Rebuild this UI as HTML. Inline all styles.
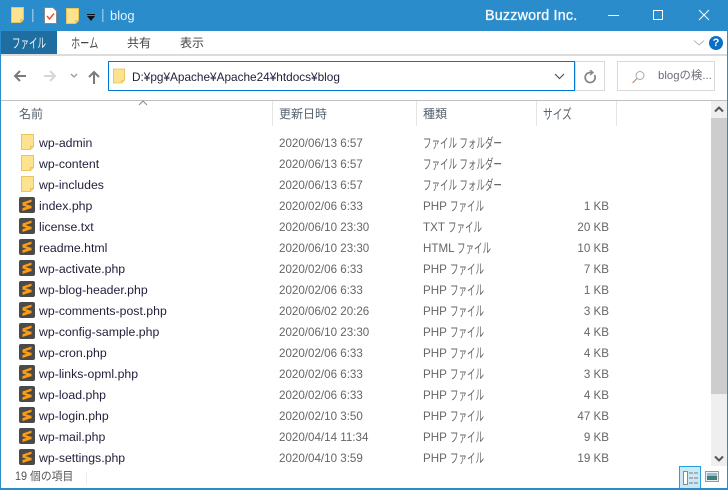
<!DOCTYPE html>
<html lang="ja"><head><meta charset="utf-8"><title>blog</title>
<style>
html,body{margin:0;padding:0;width:728px;height:490px;overflow:hidden;background:#fff}
body{position:relative;font-family:"Liberation Sans","Noto Sans CJK JP",sans-serif;font-size:12px;color:#333}
.a{position:absolute;white-space:nowrap}
.b{position:absolute}
.row{position:absolute;left:0;width:710px;height:21px;line-height:21px}
.n{position:absolute;left:39px;color:#1f1f3a;font-size:12.3px;white-space:nowrap}
.d{position:absolute;left:279px;color:#666;font-size:11.6px;white-space:nowrap}
.t{position:absolute;left:423px;color:#666;font-size:11.6px;white-space:nowrap}
.s{position:absolute;right:101px;color:#666;font-size:11.6px;white-space:nowrap}
.i{position:absolute;left:19px;top:1px;width:16px;height:16px}
.f{position:absolute;left:21px;top:1px;width:13px;height:16px}
.h{position:absolute;top:104px;height:20px;line-height:20px;color:#55616c;font-size:12px}
.sep{position:absolute;top:101px;height:25px;width:1px;background:#e5e5e5}
.k{display:inline-block;font-size:13.5px;line-height:16px;vertical-align:-1px;transform:scaleX(.63);transform-origin:0 50%}
</style></head><body>
<svg width="0" height="0" style="position:absolute"><defs>
<symbol id="fo" viewBox="0 0 13 16"><path d="M.5.5H12.5V12.5L9.500 15.500H.5Z" fill="#fde38f" stroke="#eac45c"/><path d="M9.500 15.500V12.500H12.500" fill="#f6d878" stroke="#eac45c"/></symbol>
<symbol id="su" viewBox="0 0 16 16"><rect width="16" height="16" rx="2" fill="#4a4a4a"/><path d="M3.500 5.500 12.500 2.500V5L3.500 8ZM3.500 6 12.500 9V11.500L3.500 8.500ZM3.500 11 12.500 8.500V11L3.500 14Z" fill="#ff9c12"/></symbol>
</defs></svg>

<!-- title bar -->
<div class="b" style="left:0;top:0;width:728px;height:31px;background:#2a8ccb"></div>
<svg class="b" style="left:11px;top:7px" width="13" height="16"><use href="#fo" width="13" height="16"/></svg>
<div class="b" style="left:32px;top:9px;width:1px;height:13px;background:#8cc0e2;box-shadow:1px 0 0 #5aa5d6"></div>
<svg class="b" style="left:44px;top:7px" width="13" height="17"><path d="M.5.500H9L12.500 4V16.500H.5Z" fill="#fff" stroke="#888"/><path d="M3 9 5.500 12 10 6.500" fill="none" stroke="#e8532b" stroke-width="1.500"/></svg>
<svg class="b" style="left:66px;top:8px" width="13" height="16"><use href="#fo" width="13" height="16"/></svg>
<svg class="b" style="left:86px;top:13px" width="10" height="9"><rect x="1" y="1" width="8" height="1" fill="#111"/><path d="M1 3H9L5 8Z" fill="#111"/></svg>
<div class="b" style="left:102px;top:9px;width:1px;height:13px;background:#8cc0e2;box-shadow:1px 0 0 #5aa5d6"></div>
<div class="a" style="left:110px;top:8px;color:#eaf4fb;font-size:13px;line-height:16px">blog</div>
<div class="a" style="left:485px;top:7px;color:#f4f9fd;font-size:14.300px;line-height:18px;letter-spacing:.2px;-webkit-text-stroke:.35px #f4f9fd">Buzzword Inc.</div>
<div class="b" style="left:608px;top:15px;width:11px;height:1px;background:#fff"></div>
<div class="b" style="left:653px;top:10px;width:8px;height:8px;border:1px solid #fff"></div>
<svg class="b" style="left:698px;top:9px" width="12" height="12"><path d="M1 1 11 11M11 1 1 11" stroke="#fff" stroke-width="1"/></svg>

<!-- ribbon -->
<div class="b" style="left:1px;top:31px;width:56px;height:23px;background:#1f6ea1"></div>
<div class="a" style="left:12px;top:35px;color:#f2f7fb;font-size:12px;line-height:16px"><span class="k">ファイル</span></div>
<div class="a" style="left:71px;top:35px;color:#444;font-size:12px;line-height:16px"><span class="k" style="transform:scaleX(.68)">ホーム</span></div>
<div class="a" style="left:127px;top:35px;color:#444;font-size:12px;line-height:16px">共有</div>
<div class="a" style="left:180px;top:35px;color:#444;font-size:12px;line-height:16px">表示</div>
<svg class="b" style="left:693px;top:39px" width="12" height="8"><path d="M1 1.500 6 6 11 1.500" fill="none" stroke="#b5b5b5"/></svg>
<div class="b" style="left:709px;top:36px;width:14px;height:14px;border-radius:50%;background:#0c6fc4;color:#fff;font:bold 11px/14px 'Liberation Sans',sans-serif;text-align:center">?</div>
<div class="b" style="left:1px;top:54px;width:726px;height:2px;background:#dcdcdc"></div>

<!-- nav bar -->
<svg class="b" style="left:13px;top:69px" width="14" height="14"><path d="M13 7H2M7 2 2 7 7 12" fill="none" stroke="#7a7a7a" stroke-width="2"/></svg>
<svg class="b" style="left:43px;top:69px" width="14" height="14"><path d="M1 7H12M7 2 12 7 7 12" fill="none" stroke="#d6d6d6" stroke-width="2"/></svg>
<svg class="b" style="left:70px;top:73px" width="8" height="6"><path d="M1 1 4 4 7 1" fill="none" stroke="#999" stroke-width="1.300"/></svg>
<svg class="b" style="left:87px;top:70px" width="14" height="14"><path d="M7 14V2M2 7 7 2 12 7" fill="none" stroke="#7a7a7a" stroke-width="2"/></svg>
<div class="b" style="left:108px;top:61px;width:465px;height:28px;border:1px solid #0078d7"></div>
<svg class="b" style="left:113px;top:68px" width="13" height="17"><use href="#fo" width="12" height="16" x="0" y="0"/></svg>
<div class="a" style="left:132px;top:69px;color:#1f1f3a;font-size:11.800px;line-height:16px">D:¥pg¥Apache¥Apache24¥htdocs¥blog</div>
<svg class="b" style="left:554px;top:73px" width="11" height="7"><path d="M1 1 5.500 5.500 10 1" fill="none" stroke="#555" stroke-width="1.200"/></svg>
<div class="b" style="left:575px;top:61px;width:28px;height:28px;border:1px solid #d9d9d9"></div>
<svg class="b" style="left:583px;top:70px" width="14" height="14"><path d="M11.500 5A5 5 0 1 1 7 2.500H9" fill="none" stroke="#858585" stroke-width="1.700"/><path d="M7 0 10 2.500 7 5" fill="none" stroke="#858585" stroke-width="1.400"/></svg>
<div class="b" style="left:617px;top:61px;width:96px;height:28px;border:1px solid #d9d9d9"></div>
<svg class="b" style="left:631px;top:70px" width="14" height="15"><circle cx="9" cy="5.500" r="4" fill="none" stroke="#a9a9a9"/><path d="M6 8.500 1.500 13" stroke="#c68f6c" stroke-width="1.200"/></svg>
<div class="a" style="left:658px;top:68px;color:#6d6d78;font-size:11.400px;line-height:16px">blogの検...</div>

<!-- header -->
<div class="b" style="left:1px;top:100px;width:726px;height:1px;background:#bfbfbf"></div>
<svg class="b" style="left:138px;top:100px" width="10" height="6"><path d="M1 5 5 1 9 5" fill="none" stroke="#8a8a8a"/></svg>
<div class="a h" style="left:19px">名前</div>
<div class="a h" style="left:279px">更新日時</div>
<div class="a h" style="left:423px">種類</div>
<div class="a h" style="left:543px"><span class="k" style="transform:scaleX(.72)">サイズ</span></div>
<div class="sep" style="left:272px"></div><div class="sep" style="left:416px"></div><div class="sep" style="left:536px"></div><div class="sep" style="left:616px"></div>

<!-- rows -->
<div class="row" style="top:133px"><svg class="f"><use href="#fo" width="13" height="16"/></svg><span class="n">wp-admin</span><span class="d">2020/06/13 6:57</span><span class="t"><span class="k">ファイル フォルダー</span></span></div>
<div class="row" style="top:154px"><svg class="f"><use href="#fo" width="13" height="16"/></svg><span class="n">wp-content</span><span class="d">2020/06/13 6:57</span><span class="t"><span class="k">ファイル フォルダー</span></span></div>
<div class="row" style="top:175px"><svg class="f"><use href="#fo" width="13" height="16"/></svg><span class="n">wp-includes</span><span class="d">2020/06/13 6:57</span><span class="t"><span class="k">ファイル フォルダー</span></span></div>
<div class="row" style="top:196px"><svg class="i"><use href="#su" width="16" height="16"/></svg><span class="n">index.php</span><span class="d">2020/02/06 6:33</span><span class="t">PHP <span class="k">ファイル</span></span><span class="s">1 KB</span></div>
<div class="row" style="top:217px"><svg class="i"><use href="#su" width="16" height="16"/></svg><span class="n">license.txt</span><span class="d">2020/06/10 23:30</span><span class="t">TXT <span class="k">ファイル</span></span><span class="s">20 KB</span></div>
<div class="row" style="top:238px"><svg class="i"><use href="#su" width="16" height="16"/></svg><span class="n">readme.html</span><span class="d">2020/06/10 23:30</span><span class="t">HTML <span class="k">ファイル</span></span><span class="s">10 KB</span></div>
<div class="row" style="top:259px"><svg class="i"><use href="#su" width="16" height="16"/></svg><span class="n">wp-activate.php</span><span class="d">2020/02/06 6:33</span><span class="t">PHP <span class="k">ファイル</span></span><span class="s">7 KB</span></div>
<div class="row" style="top:280px"><svg class="i"><use href="#su" width="16" height="16"/></svg><span class="n">wp-blog-header.php</span><span class="d">2020/02/06 6:33</span><span class="t">PHP <span class="k">ファイル</span></span><span class="s">1 KB</span></div>
<div class="row" style="top:301px"><svg class="i"><use href="#su" width="16" height="16"/></svg><span class="n">wp-comments-post.php</span><span class="d">2020/06/02 20:26</span><span class="t">PHP <span class="k">ファイル</span></span><span class="s">3 KB</span></div>
<div class="row" style="top:322px"><svg class="i"><use href="#su" width="16" height="16"/></svg><span class="n">wp-config-sample.php</span><span class="d">2020/06/10 23:30</span><span class="t">PHP <span class="k">ファイル</span></span><span class="s">4 KB</span></div>
<div class="row" style="top:343px"><svg class="i"><use href="#su" width="16" height="16"/></svg><span class="n">wp-cron.php</span><span class="d">2020/02/06 6:33</span><span class="t">PHP <span class="k">ファイル</span></span><span class="s">4 KB</span></div>
<div class="row" style="top:364px"><svg class="i"><use href="#su" width="16" height="16"/></svg><span class="n">wp-links-opml.php</span><span class="d">2020/02/06 6:33</span><span class="t">PHP <span class="k">ファイル</span></span><span class="s">3 KB</span></div>
<div class="row" style="top:385px"><svg class="i"><use href="#su" width="16" height="16"/></svg><span class="n">wp-load.php</span><span class="d">2020/02/06 6:33</span><span class="t">PHP <span class="k">ファイル</span></span><span class="s">4 KB</span></div>
<div class="row" style="top:406px"><svg class="i"><use href="#su" width="16" height="16"/></svg><span class="n">wp-login.php</span><span class="d">2020/02/10 3:50</span><span class="t">PHP <span class="k">ファイル</span></span><span class="s">47 KB</span></div>
<div class="row" style="top:427px"><svg class="i"><use href="#su" width="16" height="16"/></svg><span class="n">wp-mail.php</span><span class="d">2020/04/14 11:34</span><span class="t">PHP <span class="k">ファイル</span></span><span class="s">9 KB</span></div>
<div class="row" style="top:448px"><svg class="i"><use href="#su" width="16" height="16"/></svg><span class="n">wp-settings.php</span><span class="d">2020/04/10 3:59</span><span class="t">PHP <span class="k">ファイル</span></span><span class="s">19 KB</span></div>

<!-- scrollbar -->
<div class="b" style="left:711px;top:101px;width:16px;height:365px;background:#efefef"></div>
<div class="b" style="left:711px;top:118px;width:16px;height:276px;background:#cdcdcd"></div>
<svg class="b" style="left:714px;top:106px" width="10" height="7"><path d="M1 5.500 5 1.500 9 5.500" fill="none" stroke="#555" stroke-width="2"/></svg>
<svg class="b" style="left:714px;top:455px" width="10" height="7"><path d="M1 1.500 5 5.500 9 1.500" fill="none" stroke="#555" stroke-width="2"/></svg>

<!-- status -->
<div class="a" style="left:15px;top:470px;color:#555;font-size:11.500px;line-height:15px;transform:scaleX(.94);transform-origin:0 50%">19 個の項目</div>
<div class="b" style="left:86px;top:472px;width:1px;height:12px;background:#ececec"></div>
<div class="b" style="left:679px;top:466px;width:20px;height:21px;border:1px solid #26a0da;background:#cbe8f6"></div>
<svg class="b" style="left:683px;top:471px" width="16" height="14"><rect x=".5" y=".5" width="4" height="13" fill="#fff" stroke="#8a8a8a"/><path d="M6 2H15M6 7H15M6 12H15" stroke="#7a7a7a" stroke-dasharray="4 1"/></svg>
<svg class="b" style="left:705px;top:471px" width="14" height="12"><rect x=".5" y=".5" width="13" height="10" fill="#e8eef2" stroke="#999"/><rect x="2" y="2" width="10" height="3" fill="#8ec0dc"/><rect x="2" y="5" width="10" height="4" fill="#3f7f78"/></svg>

<!-- window border -->
<div class="b" style="left:0;top:31px;width:1px;height:459px;background:#2a8ccb"></div>
<div class="b" style="left:727px;top:31px;width:1px;height:459px;background:#2a8ccb"></div>
<div class="b" style="left:0;top:488px;width:728px;height:2px;background:#2a8ccb"></div>
</body></html>
